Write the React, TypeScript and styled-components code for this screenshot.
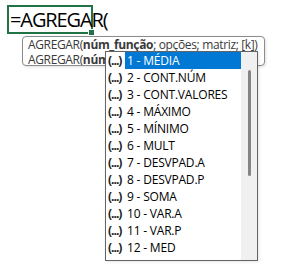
import { FunctionComponent } from "react";
import styled, { createGlobalStyle } from "styled-components";

const GlobalStyle = createGlobalStyle`
  html, body {
    margin: 0;
    padding: 0;
    background: #ffffff;
  }
  body {
    font-family: "Open Sans", "Noto Sans", sans-serif;
    color: #000;
  }
`;

const options = [
  "1 - MÉDIA",
  "2 - CONT.NÚM",
  "3 - CONT.VALORES",
  "4 - MÁXIMO",
  "5 - MÍNIMO",
  "6 - MULT",
  "7 - DESVPAD.A",
  "8 - DESVPAD.P",
  "9 - SOMA",
  "10 - VAR.A",
  "11 - VAR.P",
  "12 - MED",
];

const App: FunctionComponent = () => {
  return (
    <>
      <GlobalStyle />
      <Sheet>
        <Cell>
          <CellText>=AGREGAR(</CellText>
          <FillHandle />
        </Cell>

        <Tooltip>
          <TipLine>
            AGREGAR(<b>núm_função</b>; opções; matriz; [k])
          </TipLine>
          <TipLine>
            AGREGAR(<b>núm_função</b>; opções; ref1; ...)
          </TipLine>
        </Tooltip>

        <Dropdown>
          <List>
            {options.map((label, i) => (
              <Row key={label}>
                <EnumIcon>(...)</EnumIcon>
                <Label $selected={i === 0}>{label}</Label>
              </Row>
            ))}
          </List>
          <ScrollTrack>
            <Thumb />
          </ScrollTrack>
        </Dropdown>
      </Sheet>
    </>
  );
};

export default App;

const Sheet = styled.div`
  position: relative;
  width: 281px;
  height: 266px;
  overflow: hidden;
  padding: 5px 0 0 7px;
  box-sizing: border-box;
`;

const Cell = styled.div`
  position: relative;
  width: 86px;
  height: 29px;
  box-sizing: border-box;
  border: 2px solid #217346;
  display: flex;
  align-items: center;
`;

const CellText = styled.span`
  font-size: 20px;
  line-height: 24px;
  white-space: nowrap;
  padding-left: 1px;
  letter-spacing: -1.1px;
`;

const FillHandle = styled.div`
  position: absolute;
  right: -4px;
  bottom: -4px;
  width: 5px;
  height: 5px;
  background: #217346;
  border: 1px solid #fff;
`;

const Tooltip = styled.div`
  position: absolute;
  left: 22px;
  top: 36px;
  width: 243px;
  height: 30px;
  box-sizing: border-box;
  border: 1px solid #8c8c8c;
  border-radius: 4px;
  background: #fff;
  box-shadow: 1px 1px 3px rgba(0, 0, 0, 0.12);
  padding: 0 0 0 5px;
  overflow: hidden;
`;

const TipLine = styled.div`
  font-size: 12px;
  line-height: 15px;
  color: #3a3a3a;
  white-space: nowrap;
  letter-spacing: -0.35px;

  b {
    font-weight: 700;
  }
`;

const Dropdown = styled.div`
  position: absolute;
  left: 105px;
  top: 51px;
  width: 153px;
  height: 210px;
  box-sizing: border-box;
  border: 1px solid #646464;
  background: #fff;
  display: flex;
  box-shadow: 1px 1px 3px rgba(0, 0, 0, 0.1);
`;

const List = styled.div`
  flex: 1;
  display: flex;
  flex-direction: column;
`;

const Row = styled.div`
  height: 17px;
  display: flex;
  align-items: center;
`;

const EnumIcon = styled.span`
  width: 19px;
  padding-left: 2px;
  box-sizing: border-box;
  font-size: 12px;
  font-weight: 700;
  color: #222;
  letter-spacing: -1px;
  white-space: nowrap;
`;

const Label = styled.span<{ $selected?: boolean }>`
  flex: 1;
  height: 100%;
  display: flex;
  align-items: center;
  padding-left: 2px;
  font-size: 12px;
  letter-spacing: -0.2px;
  white-space: nowrap;
  background: ${({ $selected }) => ($selected ? "#0078d4" : "transparent")};
  color: ${({ $selected }) => ($selected ? "#fff" : "#000")};
`;

const ScrollTrack = styled.div`
  width: 16px;
  background: #f0f0f0;
  display: flex;
  justify-content: center;
  padding-top: 18px;
  box-sizing: border-box;
`;

const Thumb = styled.div`
  width: 3px;
  height: 106px;
  border-radius: 2px;
  background: #858585;
`;
